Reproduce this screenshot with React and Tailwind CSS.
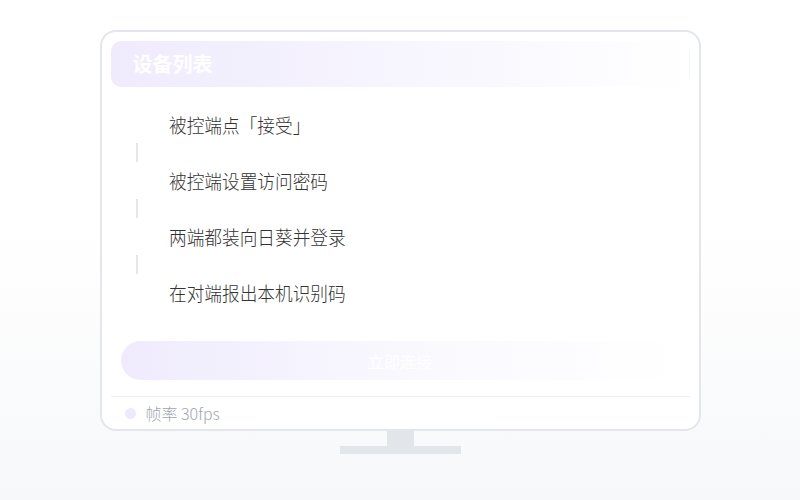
import React from "react";

const steps = ["被控端点「接受」", "被控端设置访问密码", "两端都装向日葵并登录", "在对端报出本机识别码"];

export default function App() {
  return (
    <div
      className="w-[800px] h-[500px] bg-gradient-to-b from-white from-45% to-[#f7f8fa] flex flex-col items-center pt-[30px]"
      style={{ fontFamily: '"Noto Sans CJK SC", "Noto Sans", sans-serif' }}
    >
      <div className="w-[601px] h-[401px] border-2 border-[#e3e6ea] rounded-[16px] bg-white flex flex-col px-[9px] pt-[9px]">
        <div className="h-[46px] rounded-[10px] bg-gradient-to-r from-[#efebfd] via-[#f7f5fe] to-white flex items-center pl-[22px] justify-between">
          <span className="text-[20px] font-bold text-white leading-none">设备列表</span>
          <div className="flex items-center gap-[12px]">
            <span className="text-[14px] text-white">在线</span>
            <div className="w-px h-[26px] bg-[#f3f4f6]" />
          </div>
        </div>
        <div className="mt-[19px] flex flex-col pl-[16px]">
          {steps.map((s, i) => (
            <React.Fragment key={s}>
              <div className="h-[37px] flex items-center">
                <div className="w-[20px] flex justify-center">
                  <div className="w-[10px] h-[10px] rounded-full bg-white" />
                </div>
                <span className="ml-[22px] text-[19px] scale-x-[0.93] origin-left font-light text-[#333333] leading-none whitespace-nowrap">{s}</span>
              </div>
              {i < steps.length - 1 && (
                <div className="h-[19px] w-[20px] flex justify-center">
                  <div className="w-[2px] h-full bg-[#e5e7eb]" />
                </div>
              )}
            </React.Fragment>
          ))}
        </div>
        <div className="mt-[30px] mx-[10px] h-[39px] rounded-full bg-gradient-to-r from-[#efebfd] via-[#f9f8fe] to-white flex items-center justify-center">
          <span className="text-[16px] text-white leading-none">立即连接</span>
        </div>
        <div className="mt-[16px] h-px bg-[#eceef1]" />
        <div className="h-[32px] flex items-center pl-[14px] gap-[10px]">
          <div className="w-[11px] h-[11px] rounded-full bg-[#eeeafd]" />
          <span className="text-[16px] font-light text-[#a1a6ad] leading-none whitespace-nowrap">帧率 30fps</span>
        </div>
      </div>
      <div className="w-[27px] h-[15px] bg-[#e2e5e9]" />
      <div className="w-[121px] h-[8px] bg-[#e2e5e9]" />
    </div>
  );
}
